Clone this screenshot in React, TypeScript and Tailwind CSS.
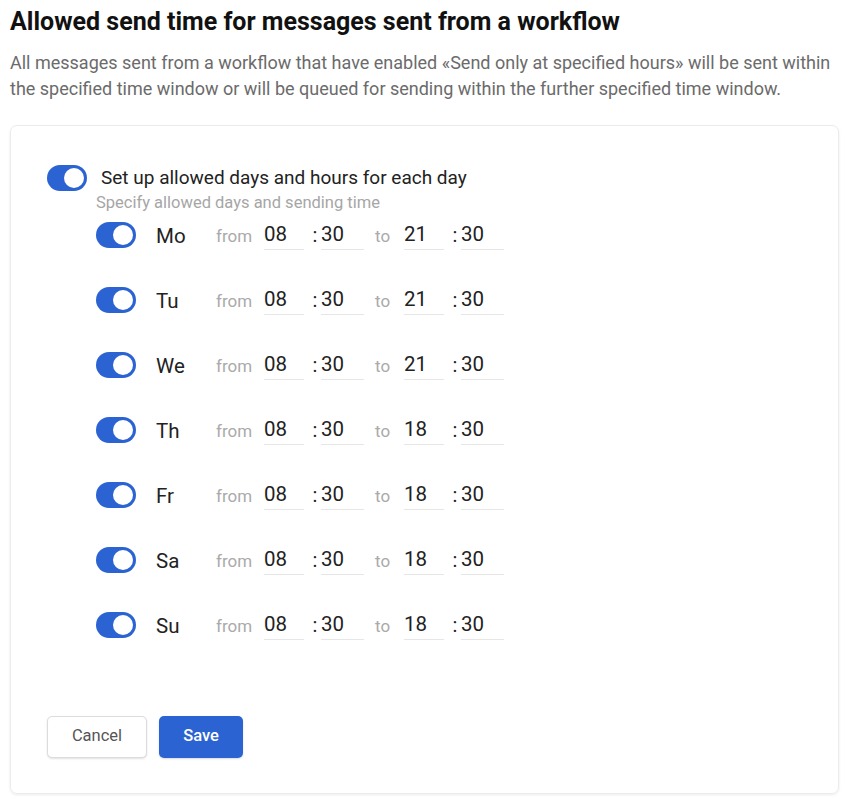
import React, { useState } from "react";

const days = [
  { d: "Mo", to: "21" },
  { d: "Tu", to: "21" },
  { d: "We", to: "21" },
  { d: "Th", to: "18" },
  { d: "Fr", to: "18" },
  { d: "Sa", to: "18" },
  { d: "Su", to: "18" },
];

function Toggle() {
  return (
    <div className="relative w-[40px] h-[26px] rounded-full bg-[#2b63d3] shrink-0">
      <div className="absolute right-[3px] top-[3px] w-[20px] h-[20px] rounded-full bg-white" />
    </div>
  );
}

function Field({ value, prefix }: { value: string; prefix?: boolean }) {
  return (
    <div className="flex items-center">
      {prefix && <span className="text-[20px] text-[#222] w-[10px] text-center mr-[1px]">:</span>}
      <div className={`${prefix ? "w-[43px]" : "w-[40px]"} h-[30px] border-b border-[#e6e6e6] text-[20.5px] text-[#222] leading-[28px] pl-[0px]`}>
        {value}
      </div>
    </div>
  );
}

export default function App() {
  useState(0);
  return (
    <div className="w-[850px] h-[799px] bg-white overflow-hidden" style={{ fontFamily: "Roboto, 'Noto Sans', sans-serif" }}>
      <div className="px-[10px] pt-[7px]">
        <h1 className="text-[25px] font-bold text-[#111] leading-[30px]">Allowed send time for messages sent from a workflow</h1>
        <p className="mt-[13px] text-[18px] text-[#6b6b6b] leading-[26px]">
          All messages sent from a workflow that have enabled «Send only at specified hours» will be sent within the specified time window or will be queued for sending within the further specified time window.
        </p>
        <div className="mt-[23px] w-[829px] h-[669px] rounded-[7px] border border-[#ececec] shadow-[0_1px_3px_rgba(0,0,0,0.08)] pl-[36px] pt-[38px]">
          <div className="flex items-center gap-[14px]">
            <Toggle />
            <span className="text-[19px] text-[#222]">Set up allowed days and hours for each day</span>
          </div>
          <div className="ml-[49px] mt-[0px] text-[16.5px] text-[#a6a6a6] leading-[20px]">Specify allowed days and sending time</div>
          <div className="ml-[49px] mt-[7px] flex flex-col gap-[35px]">
            {days.map((r) => (
              <div key={r.d} className="flex items-center h-[30px]">
                <Toggle />
                <span className="ml-[20px] w-[60px] text-[20.5px] text-[#222] mt-[4px]">{r.d}</span>
                <span className="text-[17px] text-[#aaa] w-[48px] mt-[4px]">from</span>
                <Field value="08" />
                <div className="ml-[6px]"><Field value="30" prefix /></div>
                <span className="ml-[11px] w-[29px] text-[17px] text-[#aaa] mt-[4px]">to</span>
                <Field value={r.to} />
                <div className="ml-[6px]"><Field value="30" prefix /></div>
              </div>
            ))}
          </div>
          <div className="flex gap-[12px] mt-[76px]">
            <button className="w-[100px] h-[42px] rounded-[5px] border border-[#dcdcdc] bg-white text-[16.5px] text-[#555] shadow-[0_1px_2px_rgba(0,0,0,0.12)]">Cancel</button>
            <button className="w-[84px] h-[42px] rounded-[5px] bg-[#2b63d3] text-[16.5px] font-medium text-white shadow-[0_1px_2px_rgba(0,0,0,0.15)]">Save</button>
          </div>
        </div>
      </div>
    </div>
  );
}
